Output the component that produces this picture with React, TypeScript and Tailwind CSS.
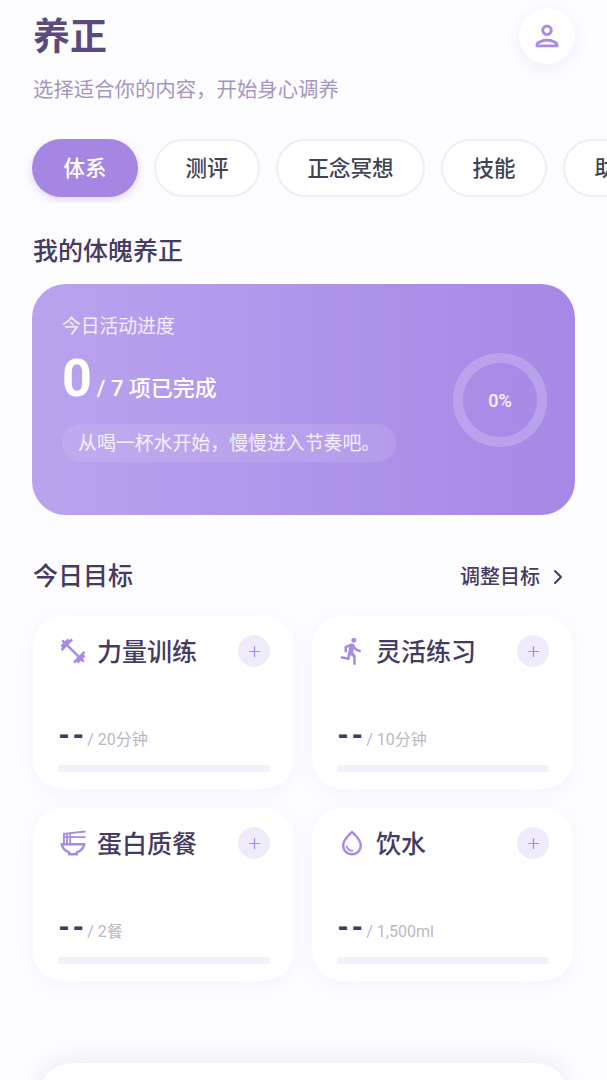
import { ChevronRight, Plus } from "lucide-react"
import {
  MdDirectionsRun,
  MdFitnessCenter,
  MdOutlinePerson,
  MdOutlineRamenDining,
  MdOutlineWaterDrop,
} from "react-icons/md"

const tabs = ["体系", "测评", "正念冥想", "技能", "助眠"]

const goals = [
  { name: "力量训练", target: "/ 20分钟", Icon: MdFitnessCenter },
  { name: "灵活练习", target: "/ 10分钟", Icon: MdDirectionsRun },
  { name: "蛋白质餐", target: "/ 2餐", Icon: MdOutlineRamenDining },
  { name: "饮水", target: "/ 1,500ml", Icon: MdOutlineWaterDrop },
]

function GoalCard({ name, target, Icon }: (typeof goals)[number]) {
  return (
    <div className="flex h-[173px] flex-col rounded-[30px] bg-white pb-[17px] pl-[25px] pr-[24px] pt-[19px] shadow-[0_4px_20px_rgba(130,110,200,0.06)]">
      <div className="flex h-[32px] items-center">
        <Icon className="h-[30px] w-[30px] shrink-0 text-[#a98ae4]" />
        <span className="ml-[9px] mt-[4px] text-[25px] font-medium leading-[32px] text-[#453a61]">{name}</span>
        <span className="ml-auto flex h-[32px] w-[32px] items-center justify-center rounded-full bg-[#f0ebfb]">
          <Plus className="h-[17px] w-[17px] text-[#a98ae4]" strokeWidth={1.75} />
        </span>
      </div>
      <div className="mt-[61px] flex h-[24px] items-center">
        <span className="text-[27px] font-black leading-[24px] tracking-[2px] text-[#453a61] [transform:translateY(-4px)]">--</span>
        <span className="ml-[1px] text-[16px] leading-[22px] text-[#bbb8c2]">{target}</span>
      </div>
      <div className="mt-auto h-[7px] rounded-full bg-[#f4f1fc]" />
    </div>
  )
}

export default function App() {
  return (
    <div className="h-[1080px] w-[607px] overflow-hidden bg-[#fdfcff] font-['Roboto','Noto_Sans_CJK_SC',sans-serif]">
      <header className="flex justify-between pl-[33px] pr-[32px] pt-[8px]">
        <div>
          <h1 className="mt-[7px] text-[37px] font-bold leading-[46px] text-[#5b4a7d]">养正</h1>
          <p className="mt-[15px] text-[20.4px] leading-[28px] text-[#a596bf]">选择适合你的内容，开始身心调养</p>
        </div>
        <div className="flex h-[56px] w-[56px] items-center justify-center rounded-full bg-white shadow-[0_4px_16px_rgba(130,110,200,0.10)]">
          <MdOutlinePerson className="h-[34px] w-[34px] text-[#a98ae4]" />
        </div>
      </header>

      <nav className="mt-[35px] flex gap-[16px] overflow-hidden pb-[6px] pl-[32px]">
        {tabs.map((tab, i) => (
          <span
            key={tab}
            className={
              i === 0
                ? "flex h-[58px] shrink-0 items-center rounded-[29px] bg-[#a586e3] px-[31.5px] pt-[3px] text-[21.5px] font-medium text-white shadow-[0_3px_8px_rgba(165,134,227,0.30)]"
                : "flex h-[58px] shrink-0 items-center rounded-[29px] border-2 border-[#f0edf8] bg-white px-[29.5px] pt-[3px] text-[21.5px] font-medium text-[#3f4354]"
            }
          >
            {tab}
          </span>
        ))}
      </nav>

      <main className="px-[32px]">
        <h2 className="ml-[1px] mt-[31px] text-[25px] font-medium leading-[36px] text-[#453a61]">我的体魄养正</h2>

        <section className="mt-[14px] flex h-[231px] justify-between rounded-[34px] bg-gradient-to-r from-[#b9a3ee] to-[#a688e6] pl-[30px] pr-[28px] pt-[29px]">
          <div>
            <p className="text-[18.8px] leading-[28px] text-white/85">今日活动进度</p>
            <div className="mt-[8px] flex h-[60px] items-baseline text-white">
              <span className="text-[52px] font-bold leading-[60px]">0</span>
              <span className="ml-[5px] text-[22px] font-medium">/ 7 项已完成</span>
            </div>
            <p className="mt-[15px] w-fit rounded-[19px] bg-white/10 px-[16px] pt-[1px] text-[18.9px] leading-[37px] text-white/85">
              从喝一杯水开始，慢慢进入节奏吧。
            </p>
          </div>
          <div className="mt-[40px] flex h-[94px] w-[94px] items-center justify-center rounded-full border-[10px] border-white/20 text-[18px] font-medium text-white/90">
            0%
          </div>
        </section>

        <div className="ml-[1px] mt-[44px] flex items-center">
          <h2 className="text-[25px] font-medium leading-[36px] text-[#453a61]">今日目标</h2>
          <span className="ml-auto text-[20px] font-medium text-[#453a61]">调整目标</span>
          <ChevronRight className="ml-[6px] mr-[5px] h-[24px] w-[24px] text-[#453a61]" strokeWidth={2} />
        </div>

        <div className="ml-[1px] mt-[21px] grid w-[540px] grid-cols-2 gap-x-[18px] gap-y-[19px]">
          {goals.map((goal) => (
            <GoalCard key={goal.name} {...goal} />
          ))}
        </div>

        <div className="mx-[6px] mt-[82px] h-[80px] rounded-t-[34px] bg-white shadow-[0_-4px_24px_rgba(60,50,90,0.08)]" />
      </main>
    </div>
  )
}
